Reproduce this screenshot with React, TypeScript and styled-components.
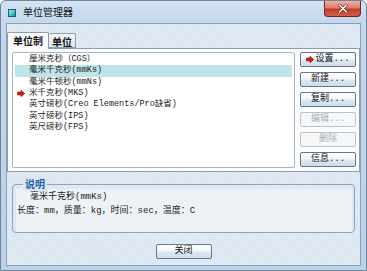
import React from "react";
import styled, { createGlobalStyle } from "styled-components";

const Global = createGlobalStyle`
  html, body { margin: 0; padding: 0; }
  body { width: 367px; height: 271px; overflow: hidden; background: #ffffff; }
  * { box-sizing: border-box; }
`;

const CJK = `"Noto Sans CJK SC", "Noto Sans", sans-serif`;
const MIX = `"Liberation Mono", "Noto Sans CJK SC", monospace`;

const Window = styled.div`
  width: 367px;
  height: 271px;
  display: flex;
  flex-direction: column;
  border: 1px solid #6f8399;
  border-radius: 6px 6px 0 0;
  background: linear-gradient(to bottom, #d3e3f3 0px, #c3d7ed 22px, #bcd2ea 100%);
  overflow: hidden;
`;

const TitleBar = styled.div`
  height: 22px;
  display: flex;
  align-items: flex-start;
  padding-left: 7px;
  padding-right: 5px;
`;

const TitleIcon = styled.div`
  width: 8px;
  height: 8px;
  margin-top: 8px;
  border: 1px solid #2a5860;
  background: linear-gradient(135deg, #9ff4f2 0%, #35c8c8 60%, #1c8f98 100%);
`;

const TitleText = styled.div`
  margin-left: 7px;
  margin-top: 4px;
  font-family: ${CJK};
  font-size: 10px;
  line-height: 14px;
  color: #111;
`;

const CloseButton = styled.div`
  margin-left: auto;
  width: 37px;
  height: 16px;
  border: 1px solid #6e2a22;
  border-top: none;
  border-radius: 0 0 4px 4px;
  background: linear-gradient(to bottom, #eeb0a4 0%, #dc7e6c 45%, #c43c26 55%, #d0604a 100%);
  display: flex;
  align-items: center;
  justify-content: center;
`;

const Frame = styled.div`
  flex: 1;
  display: flex;
  padding: 0 5px 4px 5px;
`;

const Client = styled.div`
  flex: 1;
  display: flex;
  flex-direction: column;
  border: 1px solid #8ba0b8;
  padding-top: 8px;
  background-color: #dbe6f1;
  background-image: repeating-linear-gradient(
    45deg,
    rgba(255, 255, 255, 0.25) 0px,
    rgba(255, 255, 255, 0.25) 1px,
    rgba(255, 255, 255, 0) 1px,
    rgba(255, 255, 255, 0) 3px
  );
`;

const TabStrip = styled.div`
  height: 16px;
  display: flex;
  align-items: flex-end;
  position: relative;
  z-index: 1;
`;

const Tab = styled.div<{ $active?: boolean }>`
  height: ${(p) => (p.$active ? "17px" : "15px")};
  margin-bottom: ${(p) => (p.$active ? "-1px" : "0")};
  padding: 0 ${(p) => (p.$active ? "5px" : "3px")};
  border: 1px solid #8a9db3;
  border-bottom: ${(p) => (p.$active ? "none" : "1px solid #8a9db3")};
  border-left: ${(p) => (p.$active ? "1px solid #8a9db3" : "none")};
  border-radius: 2px 2px 0 0;
  background: ${(p) =>
    p.$active ? "#fdfdfe" : "linear-gradient(to bottom, #f2f5f8, #dfe5ec)"};
  font-family: ${CJK};
  font-weight: 700;
  font-size: 10px;
  line-height: 15px;
  color: #161616;
`;

const TabPanel = styled.div`
  height: 124px;
  display: flex;
  gap: 5px;
  padding: 3px 3px 3px 4px;
  border: 1px solid #8a9db3;
  background: #fdfdfe;
`;

const List = styled.div`
  width: 283px;
  height: 116px;
  padding: 1px 1px 1px 2px;
  border: 1px solid #a4b5c8;
  border-radius: 2px;
  background: #ffffff;
  display: flex;
  flex-direction: column;
`;

const Row = styled.div<{ $selected?: boolean }>`
  height: 11.33px;
  margin-right: 1px;
  display: flex;
  align-items: center;
  background: ${(p) => (p.$selected ? "#bde5e8" : "transparent")};
  font-family: ${MIX};
  font-size: 8.5px;
  line-height: 11px;
  color: #1c1c1c;
  white-space: nowrap;
`;

const Marker = styled.div`
  width: 14px;
  height: 100%;
  display: flex;
  align-items: center;
  padding-left: 2px;
`;

const ButtonColumn = styled.div`
  width: 56px;
  display: flex;
  flex-direction: column;
  gap: 5px;
`;

const Button = styled.button<{ $w?: number }>`
  width: ${(p) => (p.$w ? `${p.$w}px` : "56px")};
  height: 15px;
  padding: 0;
  margin: 0;
  border: 1px solid #627790;
  border-radius: 2px;
  background: linear-gradient(to bottom, #ffffff 0%, #f1f5fa 45%, #dde7f2 55%, #cfdcea 100%);
  display: flex;
  align-items: center;
  justify-content: center;
  gap: 1px;
  font-family: ${MIX};
  font-size: 9px;
  line-height: 13px;
  color: #141414;
  white-space: nowrap;
  &:disabled {
    border-color: #b9c1ca;
    background: #f5f7f9;
    color: #a9afb6;
  }
`;

const Group = styled.div`
  position: relative;
  height: 49px;
  margin: 12px 5px 0 5px;
  padding: 4px 2px 0 3px;
  border: 1px solid #8ea3bb;
  border-radius: 4px;
`;

const GroupTitle = styled.div`
  position: absolute;
  left: 10px;
  top: -8px;
  padding: 0 2px;
  background: #dbe6f1;
  font-family: ${CJK};
  font-size: 10px;
  font-weight: 700;
  line-height: 14px;
  color: #2160a8;
`;

const GroupBody = styled.div`
  height: 100%;
  padding-top: 1px;
  background: #eef2f7;
  font-family: ${MIX};
  font-size: 9px;
  line-height: 14px;
  color: #1c1c1c;
  white-space: nowrap;
`;

const Line = styled.div<{ $indent?: number }>`
  padding-left: ${(p) => p.$indent ?? 1}px;
`;

const Footer = styled.div`
  display: flex;
  justify-content: center;
  margin-top: 11px;
`;

const RedArrow = () => (
  <svg width="8" height="7" viewBox="0 0 8 7">
    <polygon
      points="0.5,2 4,2 4,0.3 7.7,3.5 4,6.7 4,5 0.5,5"
      fill="#e01a14"
      stroke="#8c0c08"
      strokeWidth="0.6"
    />
  </svg>
);

const items = [
  { text: "厘米克秒（CGS）" },
  { text: "毫米千克秒(mmKs)", selected: true },
  { text: "毫米牛顿秒(mmNs)" },
  { text: "米千克秒(MKS)", current: true },
  { text: "英寸磅秒(Creo Elements/Pro缺省)" },
  { text: "英寸磅秒(IPS)" },
  { text: "英尺磅秒(FPS)" },
];

export default function App() {
  return (
    <>
      <Global />
      <Window>
        <TitleBar>
          <TitleIcon />
          <TitleText>单位管理器</TitleText>
          <CloseButton>
            <svg width="10" height="9" viewBox="0 0 10 9">
              <path
                d="M1.5 1 L8.5 8 M8.5 1 L1.5 8"
                stroke="#5a1a12"
                strokeWidth="2.6"
                strokeLinecap="round"
              />
              <path
                d="M1.5 1 L8.5 8 M8.5 1 L1.5 8"
                stroke="#ffffff"
                strokeWidth="1.6"
                strokeLinecap="round"
              />
            </svg>
          </CloseButton>
        </TitleBar>
        <Frame>
          <Client>
            <TabStrip>
              <Tab $active>单位制</Tab>
              <Tab>单位</Tab>
            </TabStrip>
            <TabPanel>
              <List>
                {items.map((it, i) => (
                  <Row key={i} $selected={it.selected}>
                    <Marker>{it.current ? <RedArrow /> : null}</Marker>
                    {it.text}
                  </Row>
                ))}
              </List>
              <ButtonColumn>
                <Button>
                  <RedArrow />
                  设置...
                </Button>
                <Button>新建...</Button>
                <Button>复制...</Button>
                <Button disabled>编辑...</Button>
                <Button disabled>删除</Button>
                <Button>信息...</Button>
              </ButtonColumn>
            </TabPanel>
            <Group>
              <GroupTitle>说明</GroupTitle>
              <GroupBody>
                <Line $indent={14}>毫米千克秒(mmKs)</Line>
                <Line>长度：mm，质量：kg，时间：sec，温度：C</Line>
              </GroupBody>
            </Group>
            <Footer>
              <Button>关闭</Button>
            </Footer>
          </Client>
        </Frame>
      </Window>
    </>
  );
}
